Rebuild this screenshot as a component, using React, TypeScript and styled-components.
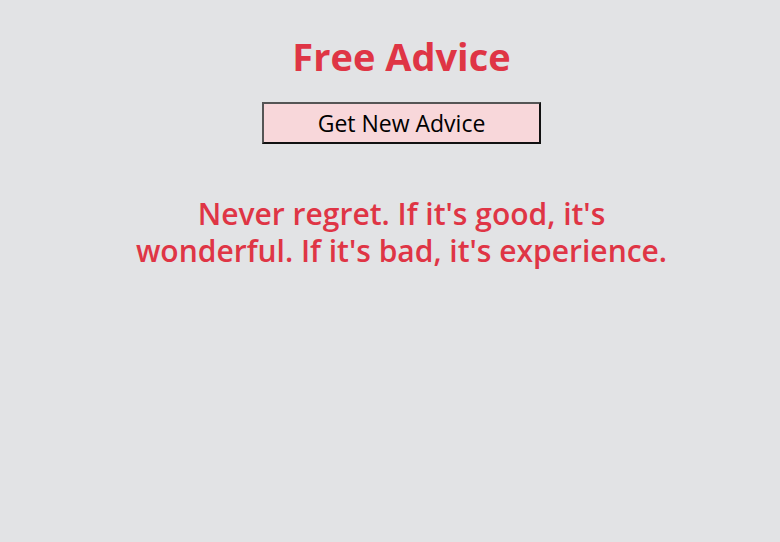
import React from "react";
import styled, { createGlobalStyle } from "styled-components";

const GlobalStyle = createGlobalStyle`
  html, body { margin: 0; padding: 0; background: #e2e3e5; }
  body { font-family: "Open Sans", "Noto Sans", sans-serif; }
`;

const Page = styled.main`
  min-height: 542px;
  box-sizing: border-box;
  display: flex;
  flex-direction: column;
  align-items: center;
  padding: 30px 0 0 23px;
`;

const Title = styled.h1`
  margin: 0;
  color: #df3545;
  font-size: 38px;
  font-weight: 700;
  line-height: 52px;
`;

const Button = styled.button`
  margin-top: 20px;
  width: 279px;
  height: 42px;
  padding: 0;
  background: #f8d7da;
  border: 2px solid;
  border-color: #555 #111 #111 #555;
  font-family: inherit;
  font-size: 23px;
  color: #000;
  cursor: pointer;
`;

const Quote = styled.p`
  margin: 51px 0 0;
  max-width: 545px;
  text-align: center;
  color: #df3545;
  font-size: 30px;
  font-weight: 600;
  line-height: 37px;
`;

export default function App() {
  return (
    <>
      <GlobalStyle />
      <Page>
        <Title>Free Advice</Title>
        <Button>Get New Advice</Button>
        <Quote>
          Never regret. If it's good, it's wonderful. If it's bad, it's experience.
        </Quote>
      </Page>
    </>
  );
}
